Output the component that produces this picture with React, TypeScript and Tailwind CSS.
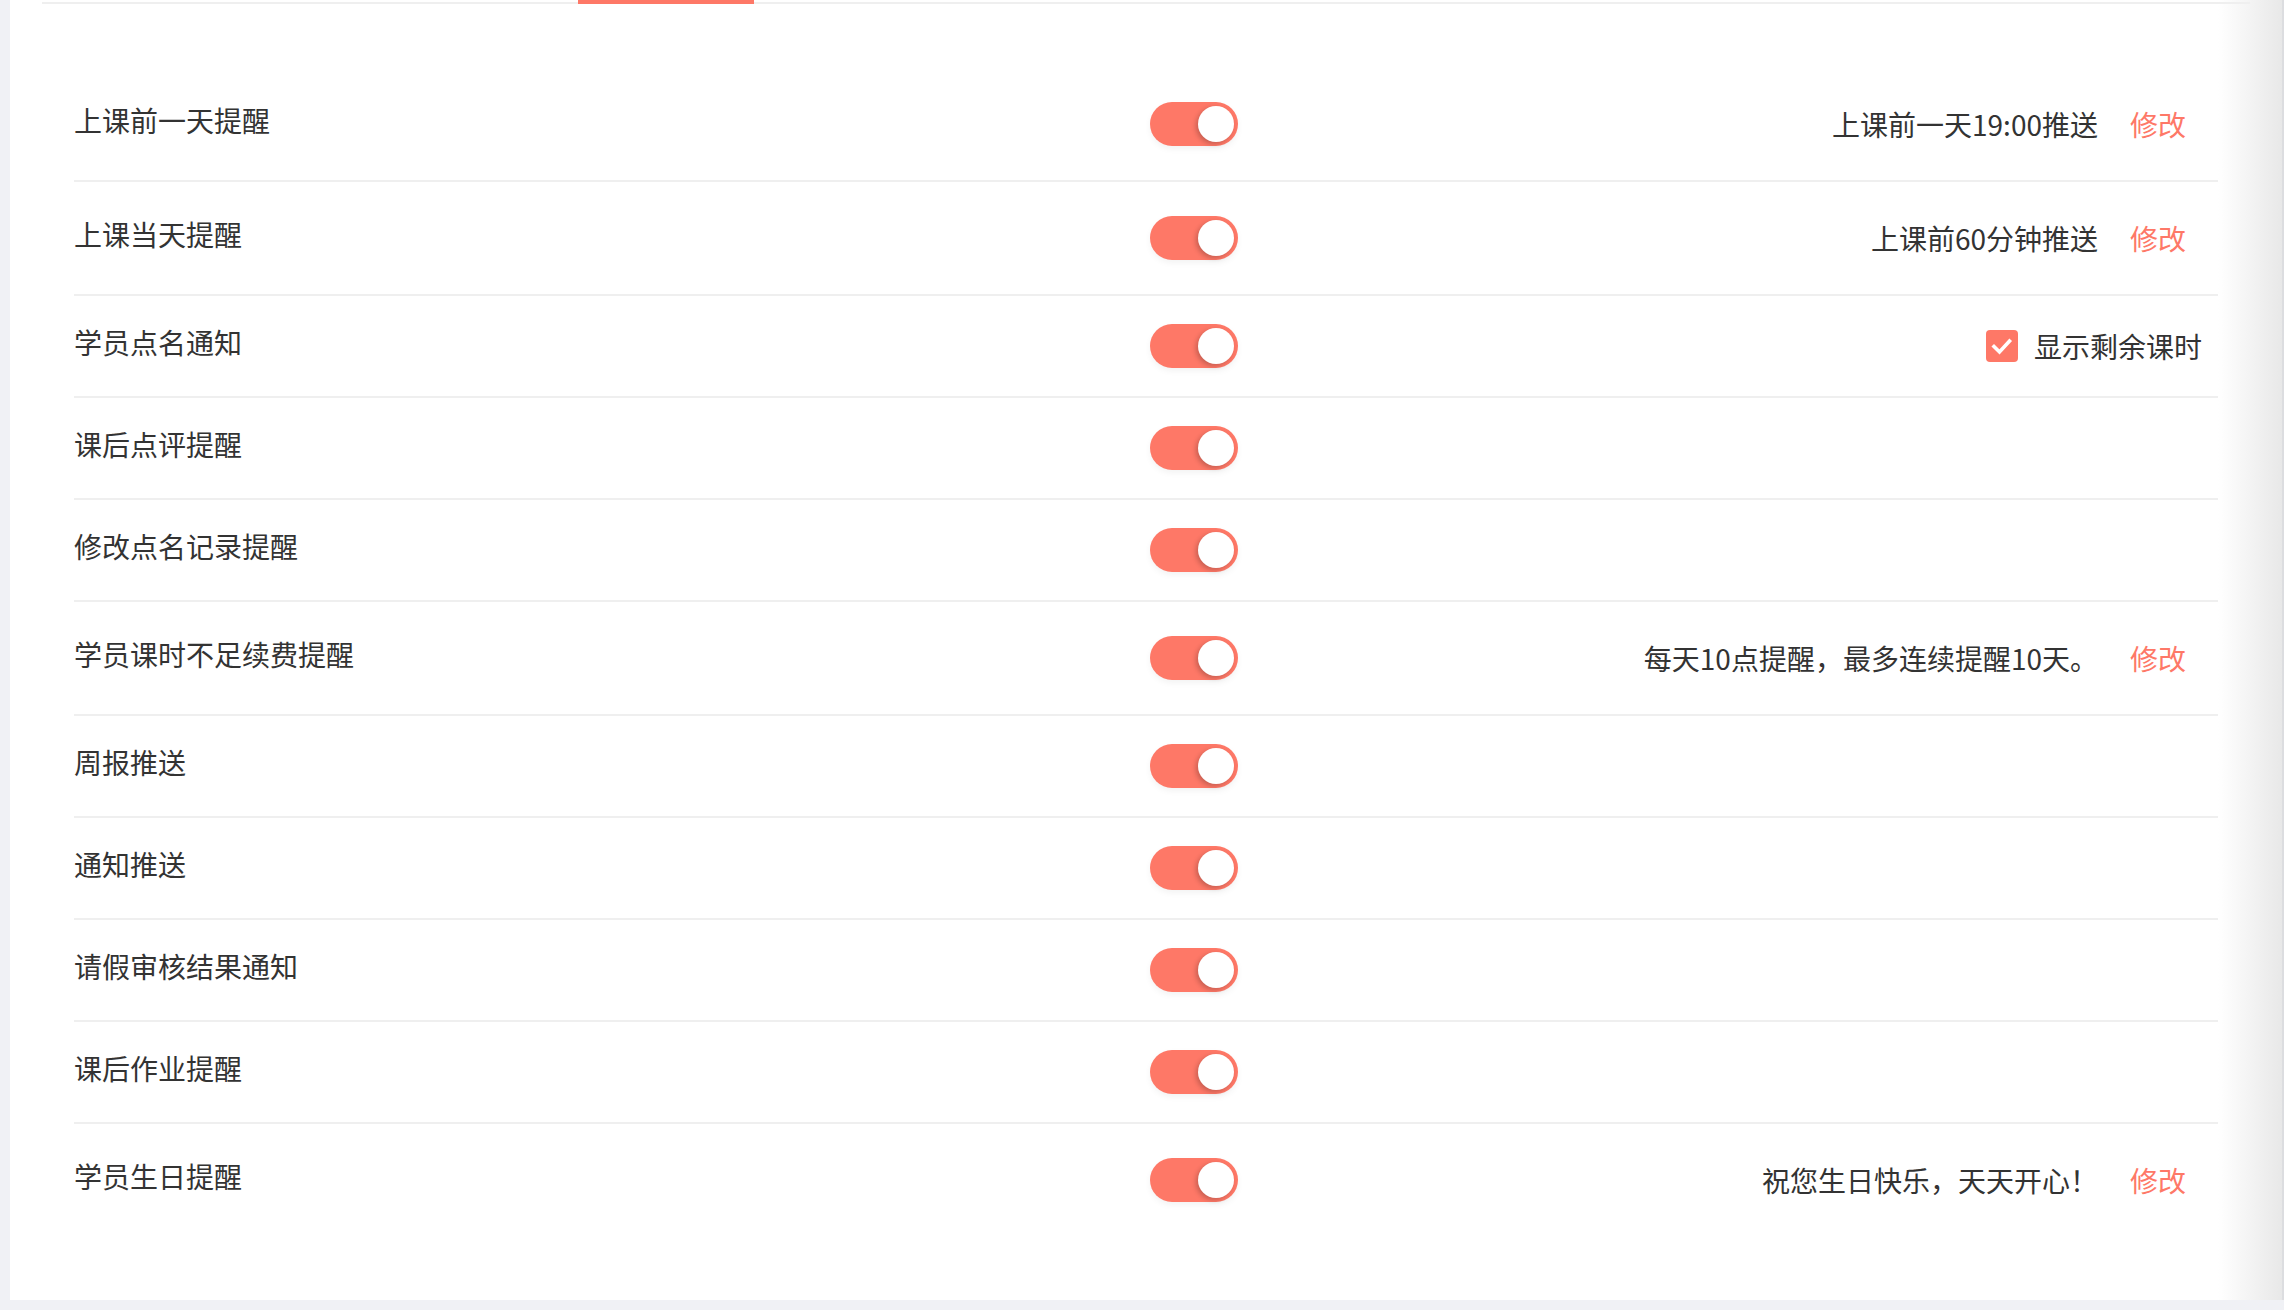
import { useState } from 'react';

interface ReminderRow {
  id: string;
  label: string;
  detail?: string;
  editable?: boolean;
  checkbox?: string;
}

const rows: ReminderRow[] = [
  { id: 'day-before', label: '上课前一天提醒', detail: '上课前一天19:00推送', editable: true },
  { id: 'same-day', label: '上课当天提醒', detail: '上课前60分钟推送', editable: true },
  { id: 'roll-call', label: '学员点名通知', checkbox: '显示剩余课时' },
  { id: 'review', label: '课后点评提醒' },
  { id: 'edit-roll', label: '修改点名记录提醒' },
  { id: 'renew', label: '学员课时不足续费提醒', detail: '每天10点提醒，最多连续提醒10天。', editable: true },
  { id: 'weekly', label: '周报推送' },
  { id: 'notice', label: '通知推送' },
  { id: 'leave', label: '请假审核结果通知' },
  { id: 'homework', label: '课后作业提醒' },
  { id: 'birthday', label: '学员生日提醒', detail: '祝您生日快乐，天天开心！', editable: true },
];

function Toggle({ on, onChange }: { on: boolean; onChange: () => void }) {
  return (
    <button
      type="button"
      onClick={onChange}
      className={`flex h-[44px] w-[88px] shrink-0 items-center rounded-full p-[4px] shadow-[0_3px_6px_rgba(0,0,0,0.05)] ${
        on ? 'justify-end bg-[#fe7867]' : 'justify-start bg-[#e5e5e5]'
      }`}
    >
      <span className="block h-[36px] w-[36px] rounded-full bg-white shadow-[-2px_2px_5px_rgba(0,0,0,0.22)]" />
    </button>
  );
}

function Checkbox({ checked, onChange, label }: { checked: boolean; onChange: () => void; label: string }) {
  return (
    <button type="button" onClick={onChange} className="flex items-center gap-4">
      <span
        className={`flex h-[32px] w-[32px] items-center justify-center rounded-[4px] ${
          checked ? 'bg-[#fe7867]' : 'border-2 border-[#d9d9d9] bg-white'
        }`}
      >
        {checked && (
          <svg viewBox="0 0 32 32" className="h-[32px] w-[32px]">
            <polyline points="8,16.5 13.5,22 23.5,11" fill="none" stroke="#fff" strokeWidth="3.6" strokeLinecap="square" />
          </svg>
        )}
      </span>
      <span>{label}</span>
    </button>
  );
}

export default function App() {
  const [enabled, setEnabled] = useState<Record<string, boolean>>(
    Object.fromEntries(rows.map((r) => [r.id, true]))
  );
  const [showLeft, setShowLeft] = useState(true);

  return (
    <div className="min-h-screen bg-[#f0f1f5] pb-[10px] pl-[10px] font-['Noto_Sans_CJK_SC','PingFang_SC',sans-serif] text-[28px] text-[#333]">
      <div className="border-r-2 border-[#dcdde0] bg-[linear-gradient(to_right,#ffffff_calc(100%_-_64px),#e8e8e8)] pb-[64px]">
        {/* tab strip, labels scrolled out of view */}
        <div className="mx-[32px] flex h-[4px] items-end">
          <div className="h-[2px] w-[536px] bg-[#efefef]" />
          <div className="h-[4px] w-[176px] bg-[#fe7867]" />
          <div className="h-[2px] flex-1 bg-[#efefef]" />
        </div>

        <div className="mx-[64px] mt-[64px]">
          {rows.map((row, i) => (
            <div
              key={row.id}
              className={`flex items-center ${row.editable ? 'h-[112px]' : 'h-[100px]'} ${
                i < rows.length - 1 ? 'box-content border-b-2 border-[#efefef]' : ''
              }`}
            >
              <div className="w-[1076px] shrink-0 pb-2 leading-[40px]">{row.label}</div>
              <Toggle
                on={enabled[row.id]}
                onChange={() => setEnabled((s) => ({ ...s, [row.id]: !s[row.id] }))}
              />
              <div className="flex flex-1 items-center justify-end pr-4 leading-[40px]">
                {row.detail && <span className="mr-4">{row.detail}</span>}
                {row.editable && (
                  <button type="button" className="px-4 text-[#fe7867]">
                    修改
                  </button>
                )}
                {row.checkbox && (
                  <Checkbox checked={showLeft} onChange={() => setShowLeft((v) => !v)} label={row.checkbox} />
                )}
              </div>
            </div>
          ))}
        </div>
      </div>
    </div>
  );
}
